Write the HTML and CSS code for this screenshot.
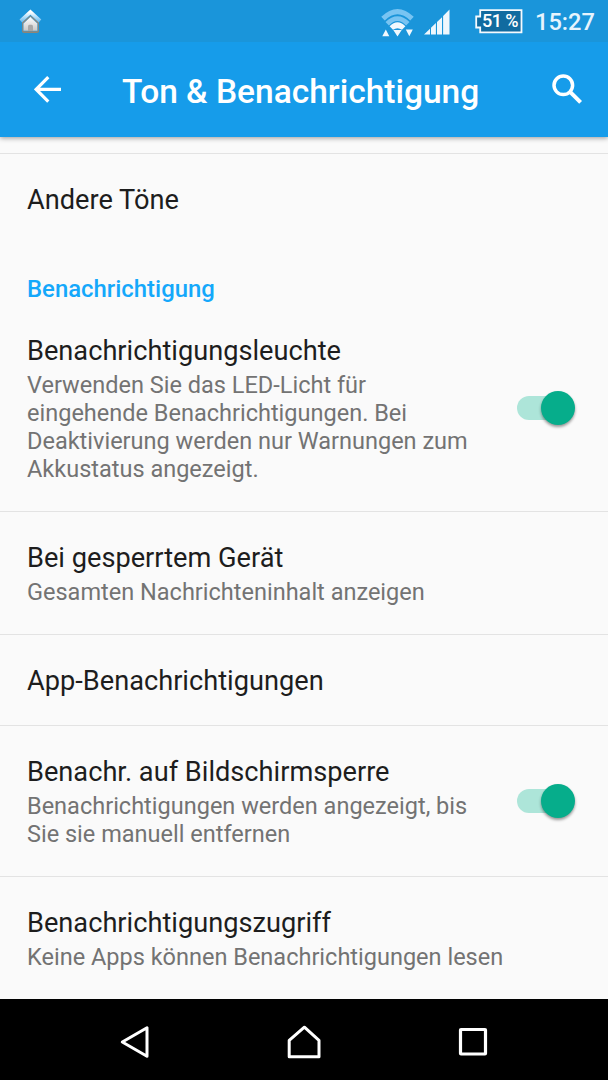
FILE: index.html
```html
<!doctype html>
<html lang="de">
<head>
<meta charset="utf-8">
<title>Ton &amp; Benachrichtigung</title>
<link rel="stylesheet" href="styles.css">
</head>
<body>
<div id="wrapper">
	<div id="status">
		<svg class="haus" width="24" height="26" viewBox="0 0 24 26">
			<defs>
				<linearGradient id="dach" x1="0" y1="0" x2="0" y2="1"><stop offset="0" stop-color="#fff"/><stop offset="1" stop-color="#74c0f0"/></linearGradient>
				<linearGradient id="wand" x1="0" y1="0" x2="0" y2="1"><stop offset="0" stop-color="#fff"/><stop offset="1" stop-color="#c9c9c9"/></linearGradient>
			</defs>
			<path d="M4 14L12.5 7.5L21 14V23.2Q21 25 19 25H6Q4 25 4 23.2Z" fill="#8d8578"/>
			<path d="M2.8 13L12.4 4.2L22 13" fill="none" stroke="url(#dach)" stroke-width="3.8"/>
			<path d="M5.2 15.5L12.4 8.8L19.6 15.5V23H5.2Z" fill="url(#wand)" stroke="#3b9dd6" stroke-width="0.6"/>
			<path d="M10 23V18.5Q10 16.8 11.5 16.8H13.5Q15 16.8 15 18.5V23Z" fill="#a8a8a8"/>
		</svg>
		<svg class="wlan" width="34" height="30" viewBox="0 0 34 30">
			<g fill="none" stroke="#78c4f2">
				<path d="M3 11.6Q17.5 -2.4 32 11.6" stroke-width="5"/>
				<path d="M7.2 16.8Q17.5 6.4 27.8 16.8" stroke-width="4.8"/>
			</g>
			<path d="M9.6 19.3Q17.5 11.2 25.4 19.3L22 22.8Q17.5 19.6 13 22.8Z" fill="#f1f8fd"/>
			<path d="M2.3 29.2L5.8 22.4L9.3 29.2ZM13.3 23H21.7L17.5 29.6ZM25.8 22.4H32.8L29.3 29.2Z" fill="#f1f8fd"/>
		</svg>
		<svg class="netz" width="26" height="26" viewBox="0 0 26 26">
			<path d="M0 25.5L6 19.8V25.5ZM7 18.8L11.9 14.1V25.5H7ZM13 13L18 8.2V25.5H13ZM19.1 7L25.5 0.6V25.5H19.1Z" fill="#eff7fd"/>
		</svg>
		<div class="akku">
			<svg width="48" height="25" viewBox="0 0 48 25"><path d="M5.2 1.2H46.5V23.3H5.2V18.5H1.2V7.5H5.2Z" fill="#116ba0" stroke="#f5fafe" stroke-width="1.8"/></svg>
			<span>51 %</span>
		</div>
		<div class="uhr">15:27</div>
	</div>
	<div id="kopf">
		<svg class="zurueck" width="28" height="28" viewBox="0 0 28 28"><path d="M27 14.4H2M14.3 2.2L2.2 14.4L14.3 26.6" fill="none" stroke="#fff" stroke-width="3.2"/></svg>
		<h1>Ton &amp; Benachrichtigung</h1>
		<svg class="suche" width="31" height="31" viewBox="0 0 31 31"><circle cx="11.3" cy="11.3" r="9.3" fill="none" stroke="#fff" stroke-width="3.5"/><path d="M17.8 17.7L28.6 28.4" stroke="#fff" stroke-width="4"/></svg>
	</div>
	<div id="liste">
		<div class="zeile">
			<div class="text"><h3>Andere Töne</h3></div>
		</div>
		<h2>Benachrichtigung</h2>
		<div class="zeile ohne">
			<div class="text">
				<h3>Benachrichtigungsleuchte</h3>
				<p>Verwenden Sie das LED-Licht für<br>eingehende Benachrichtigungen. Bei<br>Deaktivierung werden nur Warnungen zum<br>Akkustatus angezeigt.</p>
			</div>
			<div class="schalter"><i></i></div>
		</div>
		<div class="zeile">
			<div class="text">
				<h3>Bei gesperrtem Gerät</h3>
				<p>Gesamten Nachrichteninhalt anzeigen</p>
			</div>
		</div>
		<div class="zeile">
			<div class="text"><h3>App-Benachrichtigungen</h3></div>
		</div>
		<div class="zeile">
			<div class="text">
				<h3>Benachr. auf Bildschirmsperre</h3>
				<p>Benachrichtigungen werden angezeigt, bis<br>Sie sie manuell entfernen</p>
			</div>
			<div class="schalter"><i></i></div>
		</div>
		<div class="zeile">
			<div class="text">
				<h3>Benachrichtigungszugriff</h3>
				<p>Keine Apps können Benachrichtigungen lesen</p>
			</div>
		</div>
	</div>
	<div id="navi">
		<svg width="30" height="34" viewBox="0 0 30 34"><path d="M2.3 17L27 2.8V31.2Z" fill="none" stroke="#fff" stroke-width="3" stroke-linejoin="round"/></svg>
		<svg width="34" height="34" viewBox="0 0 34 34"><path d="M2.2 15.4L17.4 2.2L32 15.4V31.7H2.2Z" fill="none" stroke="#fff" stroke-width="3" stroke-linejoin="round"/></svg>
		<svg width="30" height="30" viewBox="0 0 30 30"><rect x="2.5" y="2.5" width="25" height="24.5" rx="0.5" fill="none" stroke="#fff" stroke-width="3.2"/></svg>
	</div>
</div>
</body>
</html>
```
FILE: styles.css
```css
* {margin:0; padding:0; box-sizing:border-box; }
body {font-family:Roboto,"Liberation Sans",sans-serif; background-color:#fafafa; }
svg {display:block; flex:none; }
#wrapper {display:flex; flex-direction:column; width:608px; height:1080px; overflow:hidden; }

#status {position:relative; z-index:2; display:flex; flex:none; align-items:flex-start; height:42px; padding-left:18px; background-color:#1a95da; color:#e6f4fd; }
.haus {margin-top:8px; }
.wlan {margin:7px 0 0 338px; }
.netz {margin:9px 0 0 10px; }
.akku {position:relative; margin:9px 0 0 25px; }
.akku span {position:absolute; left:7px; top:1px; width:38px; font-size:18px; line-height:22px; font-weight:500; letter-spacing:-0.6px; color:#fff; white-space:nowrap; }
.uhr {margin:6px 0 0 12px; font-size:23.6px; line-height:32px; font-weight:500; }

#kopf {position:relative; display:flex; flex:none; align-items:flex-start; height:95px; padding-left:34px; background-color:#169cea; box-shadow:0 1px 5px rgba(0,0,0,0.4); color:#fff; }
.zurueck {margin-top:33px; }
h1 {width:370px; margin:30px 0 0 60px; font-size:33.5px; line-height:40px; font-weight:500; white-space:nowrap; }
.suche {margin:32px 0 0 60px; }

#liste {flex:none; height:862px; padding-top:16px; }
.zeile {display:flex; align-items:center; justify-content:space-between; padding-left:27px; border-top:1px solid #e3e3e3; }
.ohne {border-top:none; }
.text {padding:30px 0 28px; }
h2 {height:61px; padding:31px 0 0 27px; font-size:23.9px; line-height:28px; font-weight:500; color:#14a8fb; }
h3 {font-size:27.2px; line-height:32px; font-weight:400; color:#1d1d1d; white-space:nowrap; }
p {margin-top:4px; font-size:23.53px; line-height:28px; color:#737373; white-space:nowrap; }
.schalter {position:relative; flex:none; width:57px; height:24px; margin-right:34px; border-radius:12px; background-color:#ade5d9; }
.schalter i {position:absolute; left:24px; top:-5px; width:34px; height:34px; border-radius:50%; background-color:#06ad8b; box-shadow:0 2px 3px rgba(0,0,0,0.4); }

#navi {display:flex; flex:none; align-items:center; justify-content:space-between; height:81px; padding:4px 120px 0; background-color:#000; }
```
